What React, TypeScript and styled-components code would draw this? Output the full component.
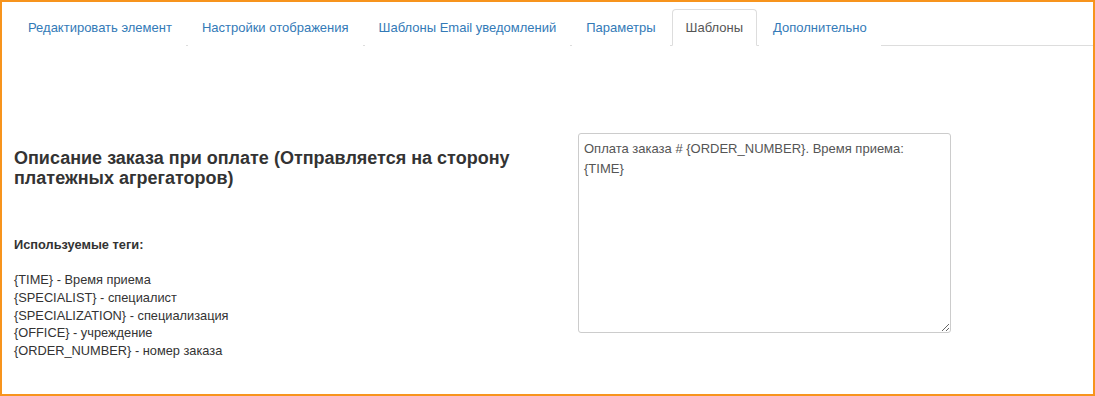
import styled, { createGlobalStyle } from 'styled-components';

const GlobalStyle = createGlobalStyle`
  html, body {
    margin: 0;
    padding: 0;
    background: #fff;
  }
  body {
    font-family: 'Liberation Sans', Arial, sans-serif;
    color: #333;
  }
`;

const Frame = styled.div`
  box-sizing: border-box;
  width: 1095px;
  height: 396px;
  border: 2px solid #f7941d;
  padding: 7px 0 0 12px;
`;

const TabList = styled.ul`
  display: flex;
  margin: 0;
  padding: 0;
  list-style: none;
  border-bottom: 1px solid #ddd;
`;

const Tab = styled.li<{ $active?: boolean }>`
  margin-right: 2px;
  margin-bottom: -1px;
  padding: 0 13px;
  height: 35px;
  display: flex;
  align-items: center;
  font-size: 13px;
  border: 1px solid ${(p) => (p.$active ? '#ddd' : 'transparent')};
  border-bottom-color: ${(p) => (p.$active ? '#fff' : 'transparent')};
  border-radius: 4px 4px 0 0;
  background: #fff;
  color: ${(p) => (p.$active ? '#555' : '#337ab7')};
  cursor: pointer;
`;

const Row = styled.div`
  display: flex;
  padding-top: 87px;
`;

const Info = styled.div`
  width: 564px;
  padding-top: 15px;
  box-sizing: border-box;
`;

const Heading = styled.h3`
  margin: 0;
  font-size: 18px;
  line-height: 20px;
  font-weight: bold;
  color: #333;
  width: 520px;
`;

const TagsTitle = styled.div`
  margin-top: 49px;
  font-size: 12.8px;
  font-weight: bold;
  line-height: 16px;
`;

const TagList = styled.div`
  margin-top: 18px;
  font-size: 12.8px;
  line-height: 17.75px;
`;

const Field = styled.textarea`
  box-sizing: border-box;
  width: 373px;
  height: 200px;
  padding: 5px 5px;
  border: 1px solid #ccc;
  border-radius: 3px;
  font-family: 'Liberation Sans', Arial, sans-serif;
  font-size: 13px;
  line-height: 20px;
  color: #555;
  resize: both;
  outline: none;
`;

const tabs = [
  'Редактировать элемент',
  'Настройки отображения',
  'Шаблоны Email уведомлений',
  'Параметры',
  'Шаблоны',
  'Дополнительно',
];

const tags = [
  '{TIME} - Время приема',
  '{SPECIALIST} - специалист',
  '{SPECIALIZATION} - специализация',
  '{OFFICE} - учреждение',
  '{ORDER_NUMBER} - номер заказа',
];

export default function App() {
  return (
    <Frame>
      <GlobalStyle />
      <TabList>
        {tabs.map((t) => (
          <Tab key={t} $active={t === 'Шаблоны'}>
            {t}
          </Tab>
        ))}
      </TabList>
      <Row>
        <Info>
          <Heading>Описание заказа при оплате (Отправляется на сторону платежных агрегаторов)</Heading>
          <TagsTitle>Используемые теги:</TagsTitle>
          <TagList>
            {tags.map((t) => (
              <div key={t}>{t}</div>
            ))}
          </TagList>
        </Info>
        <Field defaultValue="Оплата заказа # {ORDER_NUMBER}. Время приема: {TIME}" />
      </Row>
    </Frame>
  );
}
